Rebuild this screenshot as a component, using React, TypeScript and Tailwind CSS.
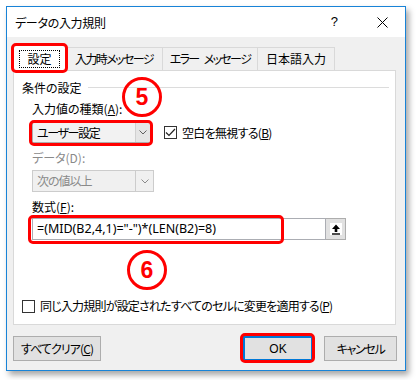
const font = "[font-family:'Noto_Sans_CJK_JP','Noto_Sans',sans-serif] [font-feature-settings:'palt']";

function Chevron({ color = "#606060" }: { color?: string }) {
  return (
    <svg width="8" height="5" viewBox="0 0 8 5">
      <path d="M0.5 0.5 L4 4 L7.5 0.5" fill="none" stroke={color} strokeWidth="1" />
    </svg>
  );
}

function Circle({ n, className }: { n: string; className: string }) {
  return (
    <div
      className={`absolute w-[40px] h-[40px] rounded-full border-[3px] border-[#ff0000] flex items-center justify-center text-[#ff0000] text-[23px] font-bold [font-family:'Liberation_Sans',sans-serif] ${className}`}
    >
      <span className="leading-none mt-[1px]">{n}</span>
    </div>
  );
}

export default function App() {
  return (
    <div className={`w-[417px] h-[380px] bg-white pt-[6px] pl-[6px] text-[12px] text-black ${font}`}>
      <div className="w-[400px] h-[365px] border border-[#1883d7] bg-[#f0f0f0] shadow-[3px_4px_6px_rgba(0,0,0,0.35)] flex flex-col">
        {/* title bar */}
        <div className="h-[30px] bg-white flex items-center pl-[8px] shrink-0">
          <span className="text-[12px] mt-[1px] tracking-[-0.3px]">データの入力規則</span>
          <span className="ml-auto mr-[39px] text-[13px] [font-family:'Liberation_Sans',sans-serif]">?</span>
          <svg width="11" height="11" viewBox="0 0 11 11" className="mr-[17px]">
            <path d="M0.5 0.5 L10.5 10.5 M10.5 0.5 L0.5 10.5" stroke="#000" strokeWidth="1" />
          </svg>
        </div>

        <div className="flex-1 px-[6px] pt-[8px]">
          {/* tabs */}
          <div className="h-[25px] flex items-end">
            <div className="relative z-10 h-[26px] w-[53px] -mb-px bg-white border border-b-0 border-[#d9d9d9] flex items-center justify-center">
              <span className="border border-dotted border-black px-[7px] h-[18px] leading-[16px] text-[12px]">設定</span>
              <div className="absolute -left-[3px] -top-[3px] -right-[3px] -bottom-[2px] border-[3px] border-[#ff0000] rounded-[5px]" />
            </div>
            <div className="h-[23px] w-[97px] border border-b-0 border-l-0 border-[#d9d9d9] flex items-center justify-center tracking-[-1.6px]">入力時メッセージ</div>
            <div className="h-[23px] w-[95px] border border-b-0 border-l-0 border-[#d9d9d9] flex items-center justify-center tracking-[-1.6px]">
              エラー<span className="ml-[5px]">メッセージ</span>
            </div>
            <div className="h-[23px] w-[77px] border border-b-0 border-l-0 border-[#d9d9d9] flex items-center justify-center">日本語入力</div>
          </div>

          {/* panel */}
          <div className="relative h-[255px] w-[383px] bg-white border border-[#d9d9d9] pt-[9px] pl-[8px]">
            <div className="flex items-center h-[16px]">
              <span className="leading-[16px]">条件の設定</span>
              <div className="ml-[6px] mr-[6px] flex-1 h-px bg-[#dcdcdc] -mt-[2px]" />
            </div>

            <div className="ml-[10px]">
              <div className="mt-[5px] h-[16px] leading-[16px]">
                入力値の種類(<span className="underline">A</span>):
              </div>
              <div className="mt-[5px] flex items-center">
                <div className="relative w-[119px] h-[21px] border border-[#adadad] bg-[#f2f2f2] flex">
                  <div className="flex-1 pl-[4px] leading-[19px] tracking-[-1.4px]">ユーザー設定</div>
                  <div className="w-[15px] bg-[#e5e5e5] border-l border-[#d0d0d0] flex items-center justify-center">
                    <Chevron />
                  </div>
                  <div className="absolute -left-[4px] -top-[3px] -right-[3px] -bottom-[4px] border-[3px] border-[#ff0000] rounded-[5px]" />
                </div>
                <div className="ml-[13px] w-[13px] h-[13px] border border-[#333] bg-white flex items-center justify-center">
                  <svg width="11" height="9" viewBox="0 0 11 9">
                    <path d="M1 4.5 L4 7.5 L10 1" fill="none" stroke="#222" strokeWidth="1.2" />
                  </svg>
                </div>
                <span className="ml-[5px] leading-[16px] tracking-[-0.7px]">
                  空白を無視する(<span className="underline">B</span>)
                </span>
              </div>

              <div className="mt-[7px] h-[16px] leading-[16px] text-[#8a8a8a]">データ(D):</div>
              <div className="mt-[4px] w-[122px] h-[22px] border border-[#cccccc] bg-[#f0f0f0] flex">
                <div className="flex-1 pl-[4px] leading-[20px] text-[#8a8a8a] tracking-[-1px]">次の値以上</div>
                <div className="w-[18px] bg-[#f0f0f0] border-l border-[#cccccc] flex items-center justify-center">
                  <Chevron color="#8a8a8a" />
                </div>
              </div>

              <div className="mt-[7px] h-[16px] leading-[16px]">
                数式(<span className="underline">F</span>):
              </div>
              <div className="relative mt-[3px] flex w-[314px] h-[22px]">
                <div className="flex-1 border border-[#abadb3] bg-white pl-[4px] leading-[20px] text-[12.5px] [font-family:'Noto_Sans',sans-serif]">
                  =(MID(B2,4,1)=&quot;-&quot;)*(LEN(B2)=8)
                </div>
                <div className="w-[20px] h-[22px] border border-l-0 border-[#adadad] bg-[#e1e1e1] flex items-center justify-center">
                  <div className="w-[14px] h-[14px] bg-white border border-[#e1e1e1] flex items-center justify-center">
                    <svg width="10" height="11" viewBox="0 0 10 11">
                      <path d="M5 0.5 L9 5 L6.3 5 L6.3 8 L3.7 8 L3.7 5 L1 5 Z" fill="#000" />
                      <rect x="1" y="9.3" width="8" height="1.4" fill="#000" />
                    </svg>
                  </div>
                </div>
                <div className="absolute -left-[4px] -top-[3px] w-[256px] h-[29px] border-[3px] border-[#ff0000] rounded-[5px]" />
              </div>
            </div>

            <div className="mt-[58px] flex items-center">
              <div className="w-[13px] h-[13px] border border-[#333] bg-white" />
              <span className="ml-[5px] leading-[16px] tracking-[-0.8px]">
                同じ入力規則が設定されたすべてのセルに変更を適用する(<span className="underline">P</span>)
              </span>
            </div>

            <Circle n="5" className="left-[108px] top-[6px]" />
            <Circle n="6" className="left-[113px] top-[179px]" />
          </div>

          {/* buttons */}
          <div className="mt-[11px] flex">
            <div className="w-[88px] h-[25px] border border-[#adadad] bg-[#e1e1e1] flex items-center justify-center tracking-[-0.9px]">
              すべてクリア(<span className="underline">C</span>)
            </div>
            <div className="relative ml-[142px] w-[70px] h-[25px] border-2 border-[#0078d7] bg-[#e1e1e1] flex items-center justify-center [font-family:'Liberation_Sans',sans-serif]">
              OK
              <div className="absolute -left-[5px] -top-[5px] -right-[4px] -bottom-[4px] border-[3px] border-[#ff0000] rounded-[5px]" />
            </div>
            <div className="ml-[11px] w-[73px] h-[25px] border border-[#adadad] bg-[#e1e1e1] flex items-center justify-center tracking-[-1.3px]">
              キャンセル
            </div>
          </div>
        </div>
      </div>
    </div>
  );
}
